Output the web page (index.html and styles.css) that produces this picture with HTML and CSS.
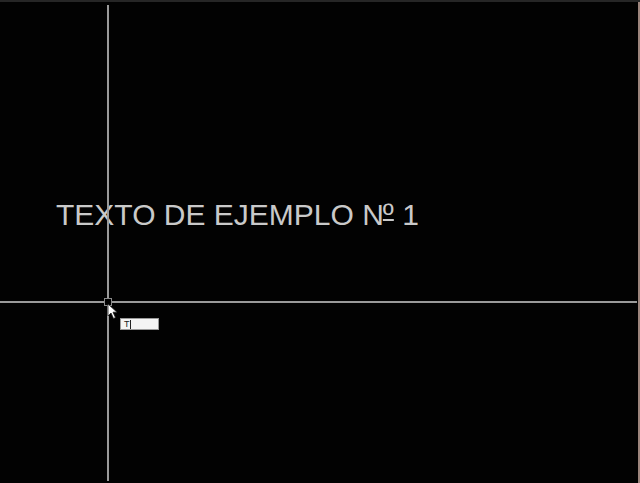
FILE: index.html
```html
<!DOCTYPE html>
<html lang="es">
<head>
<meta charset="utf-8">
<title>Texto de ejemplo</title>
<link rel="stylesheet" href="styles.css">
</head>
<body>
<div class="canvas">
  <div class="drawing-text">TEXTO DE EJEMPLO N<span class="ordinal">º</span> 1</div>
  <div class="cross-v"></div>
  <div class="cross-h"></div>
  <div class="pickbox"></div>
  <svg class="cursor" width="12" height="18" viewBox="0 0 12 18">
    <path d="M1 1 L1 13 L4 10 L6.5 15.5 L8.5 14.6 L6 9.2 L10 9.2 Z" fill="#ffffff" stroke="#202020" stroke-width="0.8"/>
  </svg>
  <div class="dyn-input"><span class="dyn-text">T</span><span class="caret"></span></div>
</div>
</body>
</html>
```
FILE: styles.css
```css
html, body {
  margin: 0;
  padding: 0;
  background: #000;
}
.canvas {
  position: relative;
  width: 640px;
  height: 483px;
  background: #020202;
  overflow: hidden;
  border-top: 2px solid #262626;
  box-sizing: border-box;
}
.canvas::after {
  content: "";
  position: absolute;
  top: 0;
  right: 0;
  width: 2px;
  height: 100%;
  background: #9c847c;
}
.drawing-text {
  position: absolute;
  left: 56px;
  top: 193px;
  font-family: "Liberation Sans", Arial, sans-serif;
  font-size: 30px;
  line-height: 40px;
  color: #c9c9c9;
  white-space: nowrap;
}
.ordinal {
  text-decoration: underline;
  text-decoration-thickness: 2px;
  text-underline-offset: -6px;
  margin-left: -1px;
}
.cross-v {
  position: absolute;
  left: 107px;
  top: 3px;
  width: 2px;
  height: 476px;
  background: #9a9a9a;
}
.cross-h {
  position: absolute;
  left: 0;
  top: 299px;
  width: 637px;
  height: 2px;
  background: #9a9a9a;
}
.pickbox {
  position: absolute;
  left: 104px;
  top: 296px;
  width: 6px;
  height: 6px;
  border: 1px solid #8a8a8a;
  background: #000;
}
.cursor {
  position: absolute;
  left: 107px;
  top: 301px;
}
.dyn-input {
  position: absolute;
  left: 120px;
  top: 316px;
  width: 34px;
  height: 10px;
  background: #f4f4f4;
  border: 1px solid #9a9a9a;
  display: flex;
  align-items: center;
  padding-left: 3px;
  box-sizing: content-box;
}
.dyn-text {
  font-family: "Liberation Sans", Arial, sans-serif;
  font-size: 9px;
  line-height: 9px;
  color: #222;
}
.caret {
  width: 1px;
  height: 9px;
  background: #222;
}
```
